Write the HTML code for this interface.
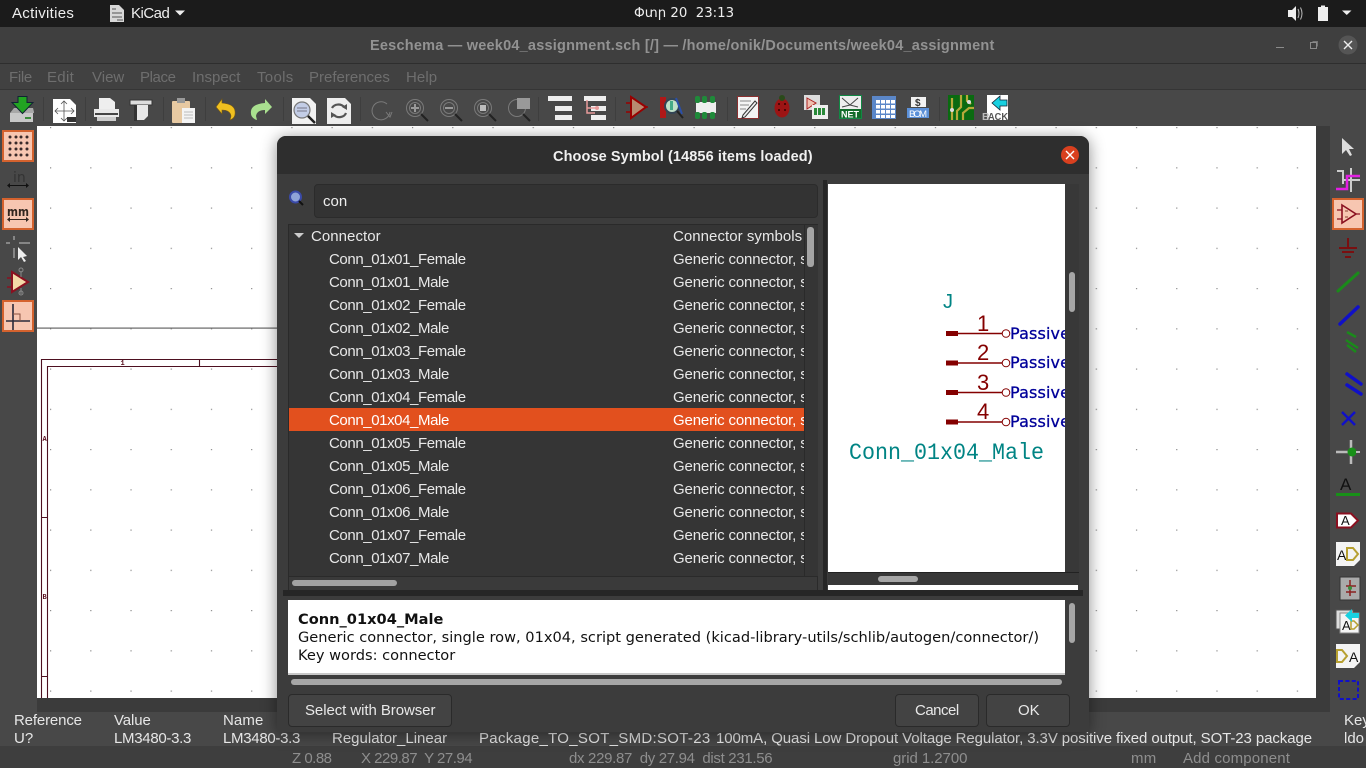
<!DOCTYPE html>
<html lang="en">
<head>
<meta charset="utf-8">
<title>Eeschema</title>
<style>
html,body{margin:0;padding:0;background:#484848;}
#p{position:relative;width:1366px;height:768px;overflow:hidden;background:#484848;font-family:"Liberation Sans",sans-serif;font-size:15px;color:#e6e6e6;}
#p div{position:absolute;box-sizing:border-box;}
.t{position:absolute;white-space:nowrap;line-height:20px;letter-spacing:0;transform:translateY(1px);}
.m{color:#6e6e6e;}
.s{color:#8e8e8e;}
.r{color:#e8e8e8;left:329px;letter-spacing:-.4px;}
.g{color:#e8e8e8;left:0;letter-spacing:-.15px;}
.d{font-family:"DejaVu Sans",sans-serif;color:#111;font-size:14.6px;letter-spacing:0;left:298px;}
.v{letter-spacing:-.3px;}
svg{position:absolute;left:0;top:0;}
</style>
</head>
<body>
<div id="p">
<!-- top bar -->
<div style="left:0;top:0;width:1366px;height:27px;background:#1b1b1b"></div>
<span class="t" style="left:12px;top:3px;color:#eee;letter-spacing:.3px">Activities</span>
<span class="t" style="left:131px;top:3px;color:#eee;letter-spacing:-.5px">KiCad</span>
<span class="t" style="left:634px;top:3px;color:#eee;font-family:'DejaVu Sans',sans-serif;font-size:13.3px">Փտր 20&nbsp; 23:13</span>
<!-- title bar -->
<div style="left:0;top:27px;width:1366px;height:37px;background:#3f3f3f;border-bottom:1px solid #2e2e2e"></div>
<span class="t" style="left:370px;top:35px;color:#929292;font-weight:bold;font-size:14.5px;letter-spacing:.22px">Eeschema — week04_assignment.sch [/] — /home/onik/Documents/week04_assignment</span>
<!-- menu -->
<div style="left:0;top:64px;width:1366px;height:26px;background:#414141;border-bottom:1px solid #353535"></div>
<span class="t m" style="left:9px;top:67px;letter-spacing:-.3px">File</span>
<span class="t m" style="left:47px;top:67px;letter-spacing:.3px">Edit</span>
<span class="t m" style="left:92px;top:67px">View</span>
<span class="t m" style="left:140px;top:67px;letter-spacing:-.4px">Place</span>
<span class="t m" style="left:192px;top:67px">Inspect</span>
<span class="t m" style="left:257px;top:67px;letter-spacing:.3px">Tools</span>
<span class="t m" style="left:309px;top:67px">Preferences</span>
<span class="t m" style="left:406px;top:67px;letter-spacing:.1px">Help</span>
<!-- canvas -->
<div style="left:37px;top:126px;width:1279px;height:572px;background:#fff"></div>
<div style="left:1316px;top:126px;width:14px;height:586px;background:#3b3b3b"></div>
<div style="left:37px;top:698px;width:1293px;height:14px;background:#3b3b3b"></div>
<svg width="1366" height="768" viewBox="0 0 1366 768">
<defs><pattern id="dots" x="50" y="127" width="40.22" height="40.25" patternUnits="userSpaceOnUse"><rect width="1.2" height="1.2" fill="#8a8a8a"/></pattern></defs>
<rect x="37" y="126" width="1279" height="572" fill="url(#dots)"/>
<rect x="37" y="327.5" width="260" height="1.2" fill="#666"/>
<g fill="none" stroke="#4d1020" stroke-width="1.1">
<path d="M41.5 698V359.5H300M47.5 698V366.5H300M199.5 359.5V366.5M41.5 517.5H47.5M41.5 676.5H47.5"/>
</g>
<g font-family="Liberation Mono,monospace" font-size="7" font-weight="bold" fill="#5a1020"><text x="120.5" y="365">1</text><text x="42.5" y="441">A</text><text x="42.5" y="599">B</text></g>
</svg>
<!-- message panel -->
<span class="t" style="left:14px;top:710px;letter-spacing:-.15px">Reference</span>
<span class="t" style="left:14px;top:728px">U?</span>
<span class="t" style="left:114px;top:710px;letter-spacing:-.1px">Value</span>
<span class="t v" style="left:114px;top:728px">LM3480-3.3</span>
<span class="t" style="left:223px;top:710px;letter-spacing:.1px">Name</span>
<span class="t v" style="left:223px;top:728px">LM3480-3.3</span>
<span class="t" style="left:332px;top:728px">Regulator_Linear</span>
<span class="t" style="left:479px;top:728px;letter-spacing:.3px">Package_TO_SOT_SMD:SOT-23</span>
<span class="t" style="left:716px;top:728px;letter-spacing:-.09px">100mA, Quasi Low Dropout Voltage Regulator, 3.3V positive fixed output, SOT-23 package</span>
<span class="t" style="left:1344px;top:710px">Key</span>
<span class="t" style="left:1344px;top:728px">ldo</span>
<!-- status bar -->
<div style="left:0;top:746px;width:1366px;height:22px;background:#3e3e3e"></div>
<span class="t s" style="left:292px;top:748px;letter-spacing:-.5px">Z 0.88</span>
<span class="t s" style="left:361px;top:748px;letter-spacing:-.5px">X 229.87&nbsp; Y 27.94</span>
<span class="t s" style="left:569px;top:748px;letter-spacing:-.32px">dx 229.87&nbsp; dy 27.94&nbsp; dist 231.56</span>
<span class="t s" style="left:893px;top:748px;letter-spacing:-.06px">grid 1.2700</span>
<span class="t s" style="left:1131px;top:748px;letter-spacing:.3px">mm</span>
<span class="t s" style="left:1183px;top:748px;letter-spacing:.15px">Add component</span>
<!-- highlighted tool buttons -->
<div style="left:2px;top:130px;width:32px;height:32px;background:#f7c6b1;border:2px solid #d4622e"></div>
<div style="left:2px;top:198px;width:32px;height:32px;background:#f7c6b1;border:2px solid #d4622e"></div>
<div style="left:2px;top:300px;width:32px;height:32px;background:#f7c6b1;border:2px solid #d4622e"></div>
<div style="left:1332px;top:198px;width:32px;height:32px;background:#f7c6b1;border:2px solid #d4622e"></div>
<!-- icons -->
<svg width="1366" height="768" viewBox="0 0 1366 768">
<!-- top bar icons -->
<path d="M110 5h9l5 5v12h-14z" fill="#d8d8d8"/><path d="M112 9h4M112 13h10M112 17h10M117 20h6" stroke="#555" fill="none"/>
<path d="M175 10.5h10l-5 5z" fill="#eee"/>
<path d="M1342 10.5h9.5l-4.75 4.5z" fill="#eee"/>
<path d="M1288 10h4l4-4v15l-4-4h-4z" fill="#eee"/><path d="M1298 9q2 4 0 9M1300.5 7.5q3 6 0 12" stroke="#bbb" fill="none" stroke-width="1"/>
<rect x="1318.5" y="7.5" width="9" height="13" fill="#eee" stroke="#eee"/><rect x="1321" y="5.5" width="4" height="2" fill="#eee"/>
<!-- window buttons -->
<path d="M1276 47.5h8" stroke="#8b8b8b" fill="none"/>
<rect x="1310.5" y="42.5" width="6" height="6" fill="none" stroke="#8b8b8b"/><path d="M1312.5 41.5h5v5" stroke="#8b8b8b" fill="none" stroke-width=".7"/>
<circle cx="1348" cy="45" r="9.5" fill="#555"/><path d="M1344 41l8 8M1352 41l-8 8" stroke="#eee" stroke-width="1.4"/>
<!-- separators -->
<g stroke="#3e3e3e"><path d="M43.5 97v24M85.500 97v24M163.500 97v24M205.500 97v24M283.500 97v24M360.500 97v24M538.500 97v24M615.500 97v24M727.500 97v24M939.500 97v24"/></g>
<!-- save -->
<path d="M14 108h19l1 4v1l-1 0h-23z" fill="#a8a8a8"/><rect x="10" y="113" width="23" height="9" fill="#c8c8c8"/><rect x="25" y="117" width="6" height="2" fill="#3a8a3a"/>
<path d="M18 96.500h9v6h6l-10.500 11-10.500-11h6z" fill="#22a322" stroke="#123" stroke-width="1"/>
<!-- page setup -->
<path d="M53 99h17l6 6v18h-23z" fill="#fff"/><path d="M64 101v20M55 111h19M61 104l3-3 3 3M61 118l3 3 3-3M58 108l-3 3 3 3M71 108l3 3-3 3" stroke="#555" stroke-width=".8" fill="none"/><rect x="67" y="117" width="9" height="5" fill="#333"/>
<!-- print -->
<path d="M99 98h11l5 4v8h-16z" fill="#eee"/><rect x="94" y="109" width="25" height="8" fill="#e8e8e8"/><rect x="95" y="113" width="23" height="2" fill="#444"/><rect x="97" y="117" width="19" height="4" fill="#ccc"/>
<!-- plot -->
<rect x="130" y="100" width="22" height="5" fill="#ddd" stroke="#333"/><path d="M137 105h11v11l-4 4h-7z" fill="#e8e8e8"/><rect x="134" y="105" width="3" height="16" fill="#333"/>
<!-- paste -->
<rect x="172" y="101" width="18" height="22" rx="1" fill="#e7c9a2"/><rect x="177" y="98" width="8" height="5" fill="#999"/><rect x="182" y="108" width="13" height="15" fill="#f4f4f4"/><path d="M184 112h9M184 115h9M184 118h9" stroke="#bbb"/>
<!-- undo / redo -->
<path d="M222 99l-6 8 6 7v-4q8 0 9 6l-1 4q6-2 5-9-1-7-13-8z" fill="#f0c020" stroke="#7a5a10" stroke-width=".6"/>
<path d="M265 99l7 8-7 7v-4q-8 0-9 6l1 4q-7-2-6-9 1-7 14-8z" fill="#a9e08f"/>
<!-- find -->
<path d="M292 98h18l6 6v20h-24z" fill="#f2f2f2"/><circle cx="302" cy="110" r="8" fill="#c3cde6" stroke="#777" stroke-width="1.200"/><path d="M297 108h10M297 111h10" stroke="#778"/><path d="M308 116l7 7" stroke="#222" stroke-width="2.500"/>
<!-- replace -->
<path d="M327 98h18l6 6v20h-24z" fill="#eee"/><path d="M332 108a7 6 0 0 1 12-1M346 113a7 6 0 0 1-12 2" stroke="#555" stroke-width="2.200" fill="none"/><path d="M342 107l5-3 0 6zM336 115l-5 3 0-6z" fill="#555"/>
<!-- refresh/zoom disabled -->
<g fill="none" stroke="#7a7a7a">
<path d="M387 104a9 9 0 1 0 3 8"/><path d="M386 112l4 5 2-5"/>
<circle cx="415" cy="108" r="8.500"/><circle cx="415" cy="108" r="5.500"/><path d="M415 104v8M411 108h8" stroke="#999" stroke-width="2"/><path d="M421 114l7 7" stroke="#222" stroke-width="2"/>
<circle cx="449" cy="108" r="8.500"/><circle cx="449" cy="108" r="5.500"/><path d="M445 108h8" stroke="#999" stroke-width="2"/><path d="M455 114l7 7" stroke="#222" stroke-width="2"/>
<circle cx="483" cy="108" r="8.500"/><circle cx="483" cy="108" r="5.500"/><rect x="480" y="105" width="6" height="6" fill="#bbb" stroke="none"/><path d="M489 114l7 7" stroke="#222" stroke-width="2"/>
<circle cx="517" cy="108" r="8.500"/><rect x="517" y="98" width="13" height="11" fill="#999" stroke="none"/><path d="M523 114l7 7" stroke="#222" stroke-width="2"/>
</g>
<!-- hierarchy -->
<rect x="548" y="96" width="24" height="5" fill="#eee"/><rect x="555" y="106" width="17" height="5" fill="#eee"/><rect x="555" y="115" width="17" height="5" fill="#eee"/>
<rect x="584" y="96" width="22" height="5" fill="#eee"/><rect x="591" y="106" width="15" height="5" fill="#eee"/><rect x="591" y="115" width="15" height="5" fill="#eee"/><path d="M587 100v13h8M587 108h12" stroke="#e89a9a" stroke-width="1.500" fill="none"/><circle cx="597" cy="108" r="2" fill="#e89a9a"/>
<!-- symbol editor -->
<path d="M631 97l15 10-15 11z" fill="#b88a70" stroke="#900" stroke-width="2"/><path d="M626 103h5M626 112h5M646 107h2" stroke="#900" stroke-width="1.500"/>
<!-- library browser -->
<rect x="660" y="97" width="6" height="21" fill="#b01818"/><circle cx="672" cy="106" r="7" fill="#bfe0c8" stroke="#345" stroke-width="2"/><path d="M676 98l6 16" stroke="#2a4fa8" stroke-width="2"/><path d="M677 111l6 7" stroke="#222" stroke-width="2"/><rect x="670" y="101" width="3" height="9" fill="#4a8"/>
<!-- footprint -->
<rect x="696" y="102" width="20" height="11" fill="#eee"/><g fill="#1f8a3a"><rect x="695" y="96" width="5" height="7" rx="2"/><rect x="702" y="96" width="5" height="7" rx="2"/><rect x="710" y="96" width="5" height="7" rx="2"/><rect x="695" y="112" width="5" height="7" rx="2"/><rect x="702" y="112" width="5" height="7" rx="2"/><rect x="710" y="112" width="5" height="7" rx="2"/></g>
<!-- annotate -->
<rect x="737.500" y="96.500" width="21" height="22" fill="#f4f4f4" stroke="#8a3030"/><path d="M740 101h11M740 105h9M740 109h6" stroke="#888"/><path d="M743 115l12-14 2 2-12 14-3 1z" fill="#eee" stroke="#333"/>
<!-- bug -->
<ellipse cx="782" cy="108" rx="7.500" ry="9.500" fill="#9c1414"/><circle cx="782" cy="98" r="3" fill="#2a4a1a"/><g fill="#300"><circle cx="779" cy="104" r="1"/><circle cx="785" cy="104" r="1"/><circle cx="779" cy="110" r="1"/><circle cx="785" cy="110" r="1"/></g>
<!-- sym/fp -->
<rect x="804" y="95" width="16" height="15" fill="#ddd"/><path d="M807 98l9 5-9 6z" fill="#f0c0b0" stroke="#a22"/><rect x="812" y="105" width="16" height="14" fill="#eee"/><g fill="#2a8a3a"><rect x="814" y="108" width="3" height="7"/><rect x="818" y="108" width="3" height="7"/><rect x="822" y="108" width="3" height="7"/></g>
<!-- net -->
<rect x="839.500" y="95.500" width="22" height="23" fill="#eee" stroke="#184"/><path d="M842 98l8 7 8-7M842 107l8-2 8 2" stroke="#444" fill="none"/><rect x="840" y="109" width="21" height="9" fill="#126b2a"/>
<text x="841" y="117.500" font-size="9" font-weight="bold" fill="#fff" font-family="Liberation Sans,sans-serif">NET</text>
<!-- table -->
<rect x="872" y="96" width="24" height="23" fill="#5b87c8"/><g fill="#fff"><rect x="876" y="100" width="4" height="3.500"/><rect x="881" y="100" width="4" height="3.500"/><rect x="886" y="100" width="4" height="3.500"/><rect x="891" y="100" width="4" height="3.500"/><rect x="876" y="105" width="4" height="3.500"/><rect x="881" y="105" width="4" height="3.500"/><rect x="886" y="105" width="4" height="3.500"/><rect x="891" y="105" width="4" height="3.500"/><rect x="876" y="110" width="4" height="3.500"/><rect x="881" y="110" width="4" height="3.500"/><rect x="886" y="110" width="4" height="3.500"/><rect x="891" y="110" width="4" height="3.500"/><rect x="876" y="115" width="4" height="3"/><rect x="881" y="115" width="4" height="3"/><rect x="886" y="115" width="4" height="3"/><rect x="891" y="115" width="4" height="3"/></g>
<!-- bom -->
<rect x="911" y="97" width="15" height="10" fill="#f2f2f2"/><text x="915" y="106" font-size="10" fill="#333" font-weight="bold" font-family="Liberation Sans,sans-serif">$</text><rect x="907" y="108" width="22" height="10" fill="#5b90d8"/><text x="909" y="117" font-size="9.500" fill="#fff" font-family="Liberation Sans,sans-serif" textLength="18">BOM</text>
<!-- pcb -->
<rect x="948" y="95" width="26" height="25" fill="#0a6a10"/><path d="M952 120V98M957 120v-9l4-4V95M963 120v-7l6-5h5M967 95v6l4 3" stroke="#b7a93a" stroke-width="2.200" fill="none"/><circle cx="952" cy="110" r="2" fill="#ddd"/><circle cx="969" cy="102" r="2" fill="#ddd"/>
<!-- back -->
<rect x="987" y="95" width="21" height="25" fill="#fff"/><path d="M1000 96v4h7v6h-7v4l-8-7z" fill="#18d0e0" stroke="#123" stroke-width=".8"/>
<text x="982" y="120" font-size="10.500" fill="#bbb" font-weight="bold" font-family="Liberation Sans,sans-serif">B</text><text x="988" y="120" font-size="10.500" fill="#555" font-weight="bold" font-family="Liberation Sans,sans-serif" textLength="20" lengthAdjust="spacingAndGlyphs">ACK</text>
<!-- left tools -->
<g fill="#3a2a2a"><circle cx="10" cy="137" r="1.500"/><circle cx="16" cy="137" r="1.500"/><circle cx="21" cy="137" r="1.500"/><circle cx="27" cy="137" r="1.500"/><circle cx="10" cy="143" r="1.500"/><circle cx="16" cy="143" r="1.500"/><circle cx="21" cy="143" r="1.500"/><circle cx="27" cy="143" r="1.500"/><circle cx="10" cy="149" r="1.500"/><circle cx="16" cy="149" r="1.500"/><circle cx="21" cy="149" r="1.500"/><circle cx="27" cy="149" r="1.500"/><circle cx="10" cy="155" r="1.500"/><circle cx="16" cy="155" r="1.500"/><circle cx="21" cy="155" r="1.500"/><circle cx="27" cy="155" r="1.500"/></g>
<text x="13" y="182" font-size="14" fill="#333" font-family="DejaVu Sans,sans-serif">in</text><path d="M8 185.500h20" stroke="#111"/><path d="M10 183l-3 2.500 3 2.500zM26 183l3 2.500-3 2.500z" fill="#111"/>
<text x="7" y="216" font-size="12" fill="#33261f" font-weight="bold" font-family="DejaVu Sans,sans-serif" textLength="22" lengthAdjust="spacingAndGlyphs">mm</text><path d="M8 219.500h20" stroke="#33261f"/><path d="M10 217l-3 2.500 3 2.500zM26 217l3 2.500-3 2.500z" fill="#33261f"/>
<path d="M14 236v4M6 243h4M19 243h11M14 248v10" stroke="#9a9a9a" stroke-width="1.500"/><path d="M18 247v13l3-3 3 5 2-1-3-4 4-1z" fill="#eee"/>
<path d="M12 272l16 10-16 10z" fill="#f3d9a8" stroke="#8a1020" stroke-width="2"/><path d="M7 278h5M7 287h5" stroke="#8a1020" stroke-width="1.500"/><path d="M21 271v6M21 288v6" stroke="#888"/><circle cx="21" cy="270" r="2" fill="none" stroke="#888"/><circle cx="21" cy="293" r="2" fill="none" stroke="#888"/>
<path d="M13 304v26M6 321h24" stroke="#2a2a3a" stroke-width="1.600"/><path d="M13 314h7v7" stroke="#8a5040" fill="none"/>
<!-- right tools -->
<path d="M1342 138v16l4-4 4 6 2-1-3-6h5z" fill="#ddd"/>
<path d="M1337 171h6v13M1351 168v24M1343 180h17" stroke="#ccc" stroke-width="2" fill="none"/><path d="M1336 189h11v-13h13" stroke="#e21ee2" stroke-width="2.500" fill="none"/>
<path d="M1342 205l14 9-14 9z" fill="#f7c6b1" stroke="#8a1020" stroke-width="1.600"/><path d="M1337 210h5M1337 219h5M1356 214h4" stroke="#8a1020" stroke-width="1.300"/><path d="M1345 211h3M1345 217h3" stroke="#8a4030"/>
<path d="M1348 238v9M1339 248h18M1342 252h12M1345 257h6" stroke="#7a0f10" stroke-width="2"/>
<path d="M1338 291l20-18" stroke="#1a8a1a" stroke-width="3" stroke-linecap="round"/>
<path d="M1340 324l18-17" stroke="#1010c8" stroke-width="3.500" stroke-linecap="round"/>
<path d="M1347 332l9 5M1347 345l9 7M1346 340l12 8" stroke="#1a8a1a" stroke-width="2.500" fill="none"/>
<path d="M1347 374l14 10M1347 385l14 9" stroke="#1010c8" stroke-width="3.500" stroke-linecap="round"/>
<path d="M1342 412l13 13M1355 412l-13 13" stroke="#1010c8" stroke-width="2.400"/>
<path d="M1336 452h12M1351 440v24" stroke="#bbb" stroke-width="2.500"/><circle cx="1352" cy="452" r="4.500" fill="#189018"/><path d="M1356 452h4" stroke="#bbb" stroke-width="2"/>
<text x="1340" y="490" font-size="17" fill="#111" font-family="Liberation Sans,sans-serif">A</text><rect x="1336" y="493" width="24" height="3" fill="#189018"/>
<path d="M1337 513.500h14l7 7-7 7h-14z" fill="#fff" stroke="#8a1020" stroke-width="2"/><text x="1341" y="525" font-size="13" fill="#111" font-family="Liberation Sans,sans-serif">A</text>
<path d="M1336 542h24v18l-6 6h-18z" fill="#f4f4f4"/><text x="1337" y="560" font-size="14" fill="#111" font-family="Liberation Sans,sans-serif">A</text><path d="M1347 548h6l5 6-5 6h-6z" fill="none" stroke="#b7a030" stroke-width="2"/>
<rect x="1340" y="577" width="20" height="23" fill="#aaa" stroke="#333"/><path d="M1350 580v16M1346 586h10M1346 592h10" stroke="#8a2020" stroke-width="1.500" fill="none"/><circle cx="1350" cy="588" r="2" fill="#3a8a3a"/>
<rect x="1336" y="610" width="17" height="19" fill="#ddd" stroke="#555"/><rect x="1340" y="613" width="19" height="20" fill="#f4f4f4" stroke="#888"/><text x="1342" y="630" font-size="13" fill="#111" font-family="Liberation Sans,sans-serif">A</text><path d="M1351 621h3l4 4-4 4h-3z" fill="none" stroke="#b7a030" stroke-width="1.500"/><path d="M1352 609v4h7v5h-7v4l-7-6.500z" fill="#18d0e0"/>
<path d="M1336 644h24v18l-6 6h-18z" fill="#f4f4f4"/><text x="1349" y="662" font-size="14" fill="#111" font-family="Liberation Sans,sans-serif">A</text><path d="M1337 650h5l5 6-5 6h-5z" fill="none" stroke="#b7a030" stroke-width="2"/>
<rect x="1339" y="681" width="19" height="18" fill="none" stroke="#1010c8" stroke-width="2" stroke-dasharray="4 2.400"/>
</svg>
<!-- DIALOG -->
<div style="left:277px;top:136px;width:812px;height:596px;background:#3c3c3c;border-radius:9px 9px 0 0;box-shadow:0 2px 16px rgba(0,0,0,.45);overflow:hidden">
  <div style="left:0;top:0;width:812px;height:38px;background:#2e2e2e"></div>
</div>
<span class="t" style="left:553px;top:146px;color:#f0f0f0;font-weight:bold;font-size:14.5px;letter-spacing:.1px">Choose Symbol (14856 items loaded)</span>
<!-- search -->
<div style="left:314px;top:184px;width:504px;height:34px;background:#333;border:1px solid #2b2b2b;border-radius:4px"></div>
<span class="t" style="left:323px;top:191px;color:#eee">con</span>
<!-- tree -->
<div style="left:288px;top:224px;width:530px;height:367px;background:#353535;border:1px solid #2a2a2a"></div>
<div style="left:289px;top:408px;width:515px;height:23px;background:#e2501e"></div>
<div style="left:804px;top:225px;width:14px;height:351px;background:#353535;border-left:1px solid #2a2a2a"></div>
<div style="left:807px;top:227px;width:7px;height:40px;background:#a4a4a4;border-radius:3px"></div>
<div style="left:289px;top:576px;width:528px;height:14px;background:#3a3a3a;border-top:1px solid #2a2a2a"></div>
<div style="left:292px;top:580px;width:105px;height:6px;background:#a2a2a2;border-radius:3px"></div>
<span class="t" style="left:311px;top:226px;color:#e8e8e8;letter-spacing:.05px">Connector</span>
<span class="t r" style="top:249px">Conn_01x01_Female</span>
<span class="t r" style="top:272px">Conn_01x01_Male</span>
<span class="t r" style="top:295px">Conn_01x02_Female</span>
<span class="t r" style="top:318px">Conn_01x02_Male</span>
<span class="t r" style="top:341px">Conn_01x03_Female</span>
<span class="t r" style="top:364px">Conn_01x03_Male</span>
<span class="t r" style="top:387px">Conn_01x04_Female</span>
<span class="t r" style="top:410px;color:#fff">Conn_01x04_Male</span>
<span class="t r" style="top:433px">Conn_01x05_Female</span>
<span class="t r" style="top:456px">Conn_01x05_Male</span>
<span class="t r" style="top:479px">Conn_01x06_Female</span>
<span class="t r" style="top:502px">Conn_01x06_Male</span>
<span class="t r" style="top:525px">Conn_01x07_Female</span>
<span class="t r" style="top:548px">Conn_01x07_Male</span>
<div style="left:673px;top:225px;width:131px;height:351px;overflow:hidden">
<span class="t g" style="top:1px;letter-spacing:.05px">Connector symbols</span>
<span class="t g" style="top:24px">Generic connector, single</span>
<span class="t g" style="top:47px">Generic connector, single</span>
<span class="t g" style="top:70px">Generic connector, single</span>
<span class="t g" style="top:93px">Generic connector, single</span>
<span class="t g" style="top:116px">Generic connector, single</span>
<span class="t g" style="top:139px">Generic connector, single</span>
<span class="t g" style="top:162px">Generic connector, single</span>
<span class="t g" style="top:185px;color:#fff">Generic connector, single</span>
<span class="t g" style="top:208px">Generic connector, single</span>
<span class="t g" style="top:231px">Generic connector, single</span>
<span class="t g" style="top:254px">Generic connector, single</span>
<span class="t g" style="top:277px">Generic connector, single</span>
<span class="t g" style="top:300px">Generic connector, single</span>
<span class="t g" style="top:323px">Generic connector, single</span>
</div>
<!-- sash and preview -->
<div style="left:823px;top:180px;width:4px;height:410px;background:#262626"></div>
<div style="left:828px;top:184px;width:237px;height:388px;background:#fff"></div>
<div style="left:1065px;top:184px;width:14px;height:388px;background:#383838"></div>
<div style="left:1069px;top:272px;width:6px;height:40px;background:#a6a6a6;border-radius:3px"></div>
<div style="left:828px;top:572px;width:251px;height:13px;background:#383838;border-top:1px solid #222"></div>
<div style="left:878px;top:576px;width:40px;height:6px;background:#a6a6a6;border-radius:3px"></div>
<div style="left:828px;top:585px;width:250px;height:5px;background:#fff"></div>
<div style="left:283px;top:590px;width:800px;height:6px;background:#262626"></div>
<svg width="1366" height="768" viewBox="0 0 1366 768" style="clip-path:inset(184px 301px 196px 828px)">
<g stroke="#840000" fill="none">
<path d="M958 333.500h44M958 363h44M958 392.500h44M958 422h44" stroke-width="1.500"/>
<circle cx="1006" cy="333.500" r="3.800"/><circle cx="1006" cy="363" r="3.800"/><circle cx="1006" cy="392.500" r="3.800"/><circle cx="1006" cy="422" r="3.800"/>
</g>
<g fill="#840000"><rect x="946" y="331" width="12" height="5"/><rect x="946" y="360.500" width="12" height="5"/><rect x="946" y="390" width="12" height="5"/><rect x="946" y="419.500" width="12" height="5"/></g>
<g font-family="Liberation Sans,sans-serif" font-size="22" fill="#840000"><text x="977" y="331">1</text><text x="977" y="360">2</text><text x="977" y="390">3</text><text x="977" y="419">4</text></g>
<g font-family="DejaVu Sans,sans-serif" font-size="16" fill="#00009a" stroke="#00009a" stroke-width=".3"><text x="1010" y="339" textLength="60">Passive</text><text x="1010" y="368" textLength="60">Passive</text><text x="1010" y="398" textLength="60">Passive</text><text x="1010" y="427" textLength="60">Passive</text></g>
<text x="943" y="308" font-family="Liberation Sans,sans-serif" font-size="20" fill="#008484">J</text>
<text x="849" y="459" font-family="Liberation Mono,monospace" font-size="23" fill="#008484" textLength="195" lengthAdjust="spacingAndGlyphs">Conn_01x04_Male</text>
</svg>
<!-- details -->
<div style="left:288px;top:600px;width:777px;height:75px;background:#fff;border-bottom:2px solid #c8c8c8"></div>
<span class="t d" style="top:609px;font-weight:bold">Conn_01x04_Male</span>
<span class="t d" style="top:627px">Generic connector, single row, 01x04, script generated (kicad-library-utils/schlib/autogen/connector/)</span>
<span class="t d" style="top:645px">Key words: connector</span>
<div style="left:1069px;top:603px;width:6px;height:40px;background:#a6a6a6;border-radius:3px"></div>
<div style="left:291px;top:679px;width:771px;height:6px;background:#a6a6a6;border-radius:3px"></div>
<!-- buttons -->
<div style="left:288px;top:694px;width:164px;height:33px;background:#434343;border:1px solid #2a2a2a;border-radius:4px"></div>
<span class="t" style="left:305px;top:700px;color:#e8e8e8;letter-spacing:-.07px">Select with Browser</span>
<div style="left:895px;top:694px;width:84px;height:33px;background:#434343;border:1px solid #2a2a2a;border-radius:4px"></div>
<span class="t" style="left:915px;top:700px;color:#e8e8e8;letter-spacing:-.5px">Cancel</span>
<div style="left:986px;top:694px;width:84px;height:33px;background:#434343;border:1px solid #2a2a2a;border-radius:4px"></div>
<span class="t" style="left:1018px;top:700px;color:#e8e8e8">OK</span>
<svg width="1366" height="768" viewBox="0 0 1366 768">
<path d="M294 233h10l-5 5z" fill="#ccc"/>
<circle cx="295.500" cy="197" r="5.500" fill="#8fa3d8" stroke="#3a4aa8" stroke-width="2"/><path d="M299 201l4 4" stroke="#111" stroke-width="2"/>
<circle cx="1070" cy="155" r="9" fill="#d9401f"/><path d="M1066 151l8 8M1074 151l-8 8" stroke="#fff" stroke-width="1.400"/>
</svg>
</div>
</body>
</html>
